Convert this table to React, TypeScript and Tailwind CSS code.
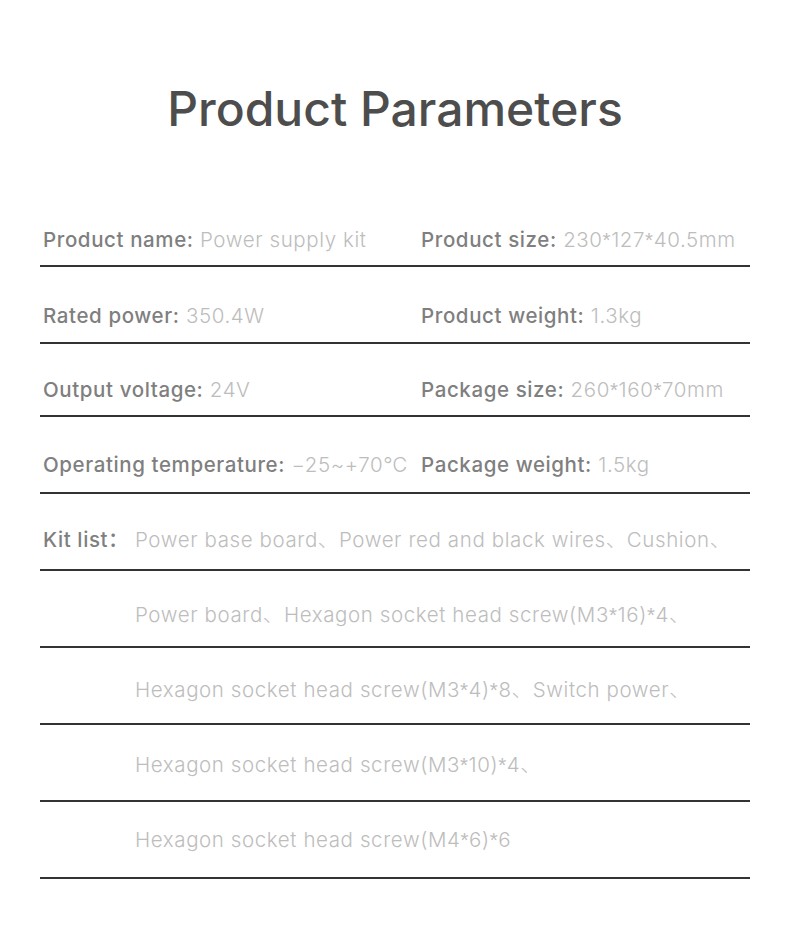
const pairs = [
  [["Product name:", "Power supply kit"], ["Product size:", "230*127*40.5mm"]],
  [["Rated power:", "350.4W"], ["Product weight:", "1.3kg"]],
  [["Output voltage:", "24V"], ["Package size:", "260*160*70mm"]],
  [["Operating temperature:", "\u221225~+70\u2103"], ["Package weight:", "1.5kg"]],
];

const kit = [
  "Power base board\u3001Power red and black wires\u3001Cushion\u3001",
  "Power board\u3001Hexagon socket head screw(M3*16)*4\u3001",
  "Hexagon socket head screw(M3*4)*8\u3001Switch power\u3001",
  "Hexagon socket head screw(M3*10)*4\u3001",
  "Hexagon socket head screw(M4*6)*6",
];

const rowPads = ["pb-[11px] h-[77px]", "pb-[12px] h-[77px]", "pb-[11px] h-[73px]", "pb-[13px] h-[77px]"];
const kitPads = ["pb-[15px]", "pb-[17px]", "pb-[19px]", "pb-[21px]", "pb-[23px]"];

// Inter centres its asterisk; the picture has the raised kind
function Txt({ s }: { s: string }) {
  const parts = s.split("*");
  return (
    <>
      {parts.map((p, i) => (
        <span key={i}>
          {i > 0 && <span className="font-['Liberation_Sans',sans-serif]">*</span>}
          {p}
        </span>
      ))}
    </>
  );
}

function Cell({ label, value }: { label: string; value: string }) {
  return (
    <div className="whitespace-nowrap">
      <span className="font-medium text-[#7f7f7f]">{label}</span>{" "}
      <span className="font-light text-[#bdbdbd]">
        <Txt s={value} />
      </span>
    </div>
  );
}

export default function App() {
  return (
    <div className="w-[790px] h-[949px] bg-white font-['Inter','Noto_Sans_CJK_SC',sans-serif] overflow-hidden">
      <h1 className="pt-[79px] text-center text-[48px] leading-[60px] font-medium text-[#4d4d4d]">
        Product Parameters
      </h1>
      <div className="mt-[51px] mx-[40px] w-[710px] text-[20.5px] leading-[28px] tracking-[0.6px]">
        {pairs.map((p, i) => (
          <div key={i} className={`flex items-end border-b-2 border-[#333333] ${rowPads[i]}`}>
            <div className="w-[381px] pl-[3px]">
              <Cell label={p[0][0]} value={p[0][1]} />
            </div>
            <Cell label={p[1][0]} value={p[1][1]} />
          </div>
        ))}
        {kit.map((k, i) => (
          <div key={i} className={`flex items-end h-[77px] border-b-2 border-[#333333] ${kitPads[i]}`}>
            <div className="w-[95px] pl-[3px] font-medium text-[#7f7f7f] whitespace-nowrap">
              {i === 0 ? "Kit list\uFF1A" : ""}
            </div>
            <div className="font-light text-[#bdbdbd] whitespace-nowrap">
              <Txt s={k} />
            </div>
          </div>
        ))}
      </div>
    </div>
  );
}
